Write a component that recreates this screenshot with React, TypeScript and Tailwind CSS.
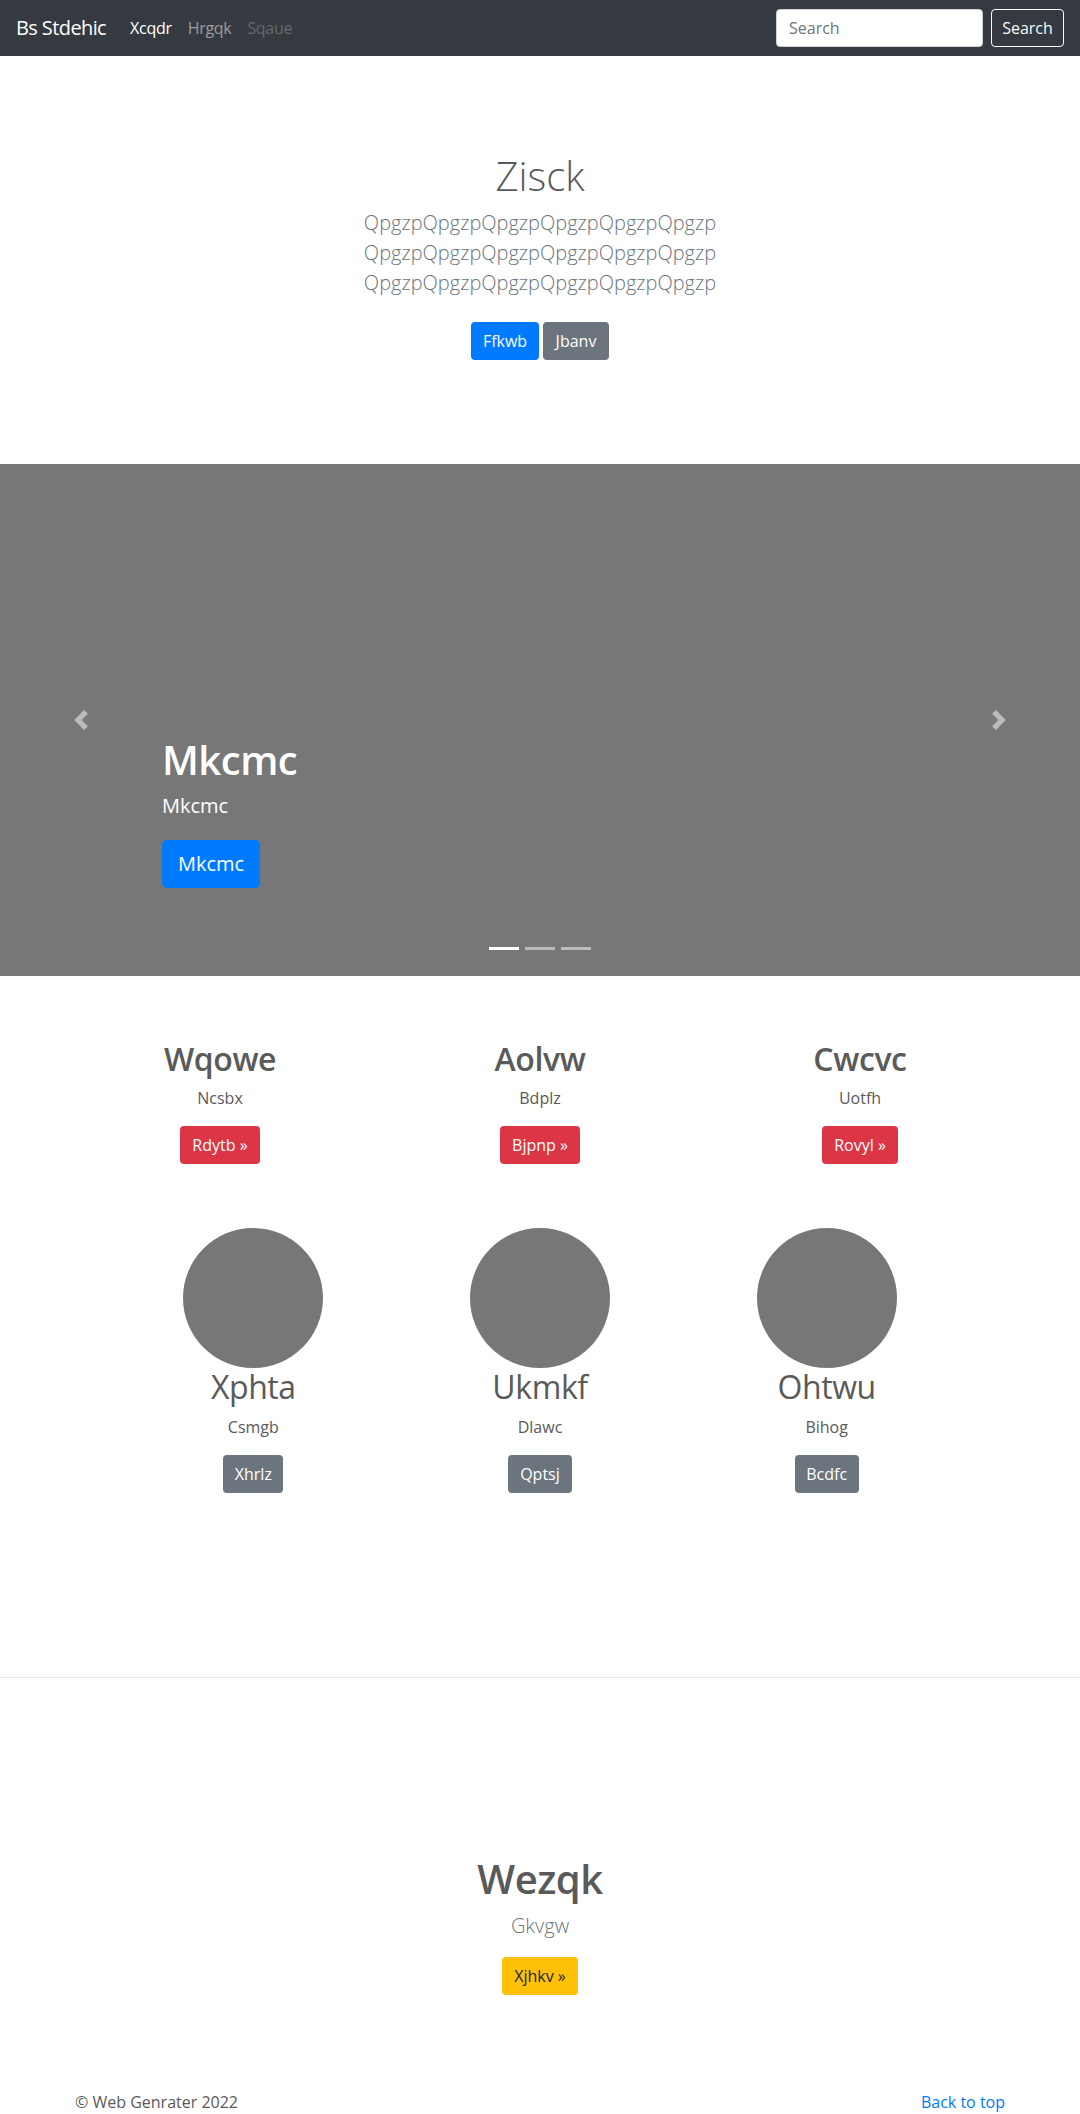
import React from "react";

function PrevIcon() {
  return (
    <svg width="20" height="20" viewBox="0 0 8 8" fill="#fff">
      <path d="M5.25 0l-4 4 4 4 1.5-1.5-2.5-2.5 2.5-2.5-1.5-1.5z" />
    </svg>
  );
}

function NextIcon() {
  return (
    <svg width="20" height="20" viewBox="0 0 8 8" fill="#fff">
      <path d="M2.75 0l-1.5 1.5 2.5 2.5-2.5 2.5 1.5 1.5 4-4-4-4z" />
    </svg>
  );
}

const features = [
  { t: "Wqowe", s: "Ncsbx", b: "Rdytb »", w: "w-[80px]" },
  { t: "Aolvw", s: "Bdplz", b: "Bjpnp »", w: "w-[80px]" },
  { t: "Cwcvc", s: "Uotfh", b: "Rovyl »", w: "w-[76px]" },
];

const people = [
  { t: "Xphta", s: "Csmgb", b: "Xhrlz", w: "w-[60px]" },
  { t: "Ukmkf", s: "Dlawc", b: "Qptsj", w: "w-[64px]" },
  { t: "Ohtwu", s: "Bihog", b: "Bcdfc", w: "w-[64px]" },
];

export default function App() {
  return (
    <div className="min-h-[2114px] bg-white text-[#5a5a5a] font-['Open_Sans','Noto_Sans',sans-serif] text-base leading-[1.5]">
      {/* Navbar */}
      <nav className="h-14 bg-[#343a40] flex items-center px-4">
        <a className="text-white text-xl leading-[1.5] py-[5px] mr-4 whitespace-nowrap tracking-[-0.6px]">Bs Stdehic</a>
        <ul className="flex items-center tracking-[-0.3px]">
          <li>
            <a className="block px-2 py-2 text-white">Xcqdr</a>
          </li>
          <li>
            <a className="block px-2 py-2 text-white/50">Hrgqk</a>
          </li>
          <li>
            <a className="block px-2 py-2 text-white/25">Sqaue</a>
          </li>
        </ul>
        <form className="ml-auto flex items-center">
          <input
            placeholder="Search"
            className="w-[207px] h-[38px] rounded-[4px] px-3 border border-[#ced4da] bg-white text-base text-[#495057] mr-2 placeholder:text-[#6c757d] outline-none"
          />
          <button
            type="button"
            className="w-[73px] h-[38px] flex items-center justify-center border border-[#f8f9fa] rounded-[4px] text-[#f8f9fa] text-base"
          >
            Search
          </button>
        </form>
      </nav>

      {/* Jumbotron */}
      <section className="py-24 text-center">
        <div className="mx-auto max-w-[640px] px-[15px]">
          <h1 className="text-[40px] leading-[1.2] font-light mb-2 text-[#5a5a5a]">Zisck</h1>
          <p className="text-xl font-light text-[#6c757d] leading-[1.5] mb-4">
            <span className="block">QpgzpQpgzpQpgzpQpgzpQpgzpQpgzp</span>
            <span className="block">QpgzpQpgzpQpgzpQpgzpQpgzpQpgzp</span>
            <span className="block">QpgzpQpgzpQpgzpQpgzpQpgzpQpgzp</span>
          </p>
          <div className="flex justify-center gap-1 py-2">
            <a className="w-[68px] h-[38px] flex items-center justify-center rounded-[4px] bg-[#007bff] text-white">Ffkwb</a>
            <a className="w-[66px] h-[38px] flex items-center justify-center rounded-[4px] bg-[#6c757d] text-white">Jbanv</a>
          </div>
        </div>
      </section>

      {/* Carousel */}
      <div className="relative h-[512px] bg-[#777777] mb-16">
        <div className="absolute left-0 top-0 h-full w-[15%] flex items-center justify-center opacity-50">
          <PrevIcon />
        </div>
        <div className="absolute right-0 top-0 h-full w-[15%] flex items-center justify-center opacity-50">
          <NextIcon />
        </div>
        <div className="absolute left-[15%] right-[15%] bottom-12 py-5 text-white text-left">
          <h1 className="text-[40px] font-semibold leading-[1.2] mb-2 tracking-[-0.5px]">Mkcmc</h1>
          <p className="text-xl leading-[1.4] mb-5">Mkcmc</p>
          <div className="mb-5">
            <a className="w-[98px] h-[48px] flex items-center justify-center rounded-[4.8px] bg-[#007bff] text-white text-xl">Mkcmc</a>
          </div>
        </div>
        <div className="absolute left-0 right-0 bottom-4 flex justify-center">
          <span className="w-[30px] h-[3px] mx-[3px] my-[10px] bg-white"></span>
          <span className="w-[30px] h-[3px] mx-[3px] my-[10px] bg-white/50"></span>
          <span className="w-[30px] h-[3px] mx-[3px] my-[10px] bg-white/50"></span>
        </div>
      </div>

      {/* Marketing */}
      <div className="mx-auto w-[960px]">
        <div className="grid grid-cols-3">
          {features.map((f) => (
            <div key={f.t} className="px-[15px] mb-6 text-center">
              <h2 className="text-[32px] font-semibold leading-[1.2] mb-2 tracking-[-0.4px]">{f.t}</h2>
              <p className="mx-3 mb-4">{f.s}</p>
              <div className="mb-4 flex justify-center">
                <a className={`${f.w} h-[38px] flex items-center justify-center rounded-[4px] bg-[#dc3545] text-white`}>{f.b}</a>
              </div>
            </div>
          ))}
        </div>
      </div>

      <div className="mx-auto w-[860px] mt-6">
        <div className="grid grid-cols-3">
          {people.map((p) => (
            <div key={p.t} className="mb-6 text-center">
              <div className="mx-auto w-[140px] h-[140px] rounded-full bg-[#777777]"></div>
              <h2 className="text-[32px] font-normal leading-[1.2] mb-2 tracking-[-0.4px]">{p.t}</h2>
              <p className="mb-4">{p.s}</p>
              <div className="mb-4 flex justify-center">
                <a className={`${p.w} h-[38px] flex items-center justify-center rounded-[4px] bg-[#6c757d] text-white`}>{p.b}</a>
              </div>
            </div>
          ))}
        </div>
      </div>

      <hr className="mt-[144px] border-0 border-t border-[#e6e6e6]" />

      {/* Bottom section */}
      <section className="pt-[177px] text-center">
        <h1 className="text-[40px] font-semibold leading-[1.2] mb-2 tracking-[-0.5px]">Wezqk</h1>
        <p className="text-xl font-light text-[#6c757d] leading-[1.5] mb-4">Gkvgw</p>
        <div className="flex justify-center">
          <a className="w-[76px] h-[38px] flex items-center justify-center rounded-[4px] bg-[#ffc107] text-[#212529]">Xjhkv »</a>
        </div>
      </section>

      {/* Footer */}
      <footer className="mx-auto w-[960px] px-[15px] mt-[95px] flex justify-between">
        <p>© Web Genrater 2022</p>
        <p>
          <a className="text-[#007bff]">Back to top</a>
        </p>
      </footer>
    </div>
  );
}
